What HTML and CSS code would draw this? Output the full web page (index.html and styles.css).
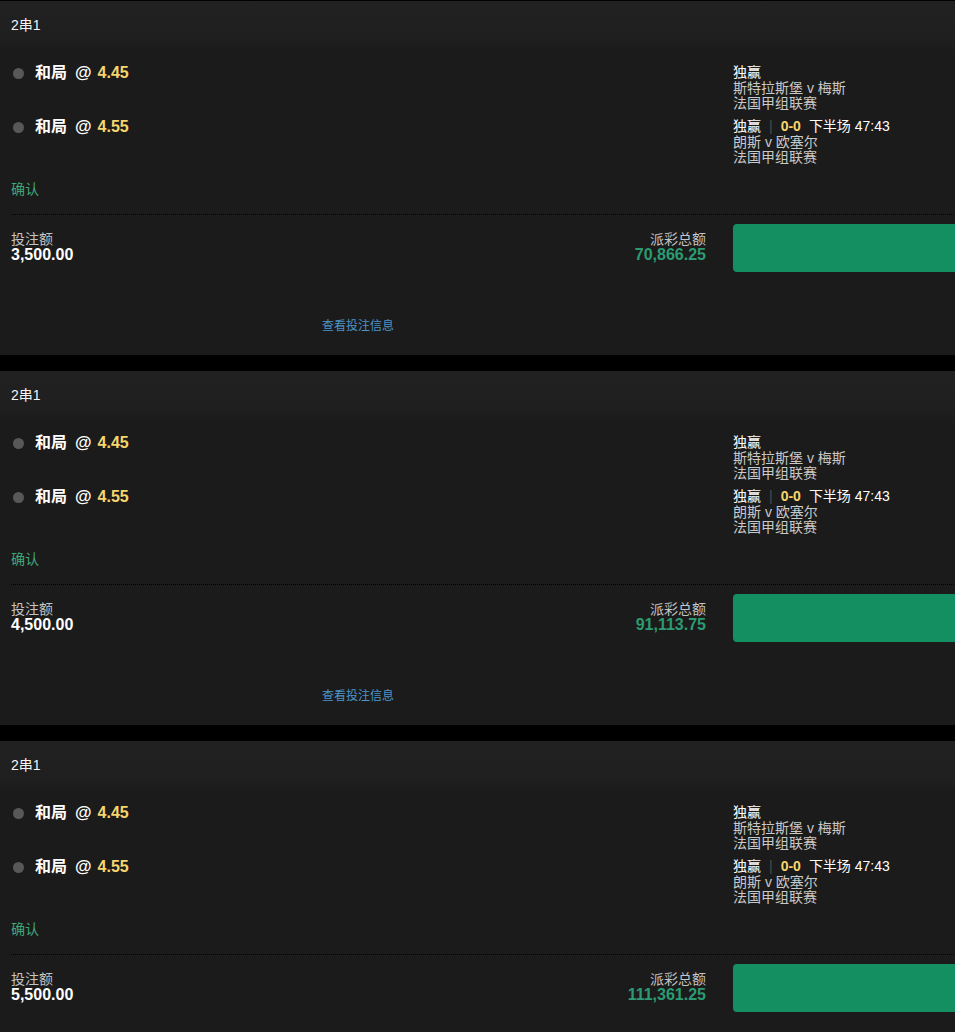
FILE: index.html
```html
<!DOCTYPE html>
<html lang="zh-CN">
<head>
<meta charset="utf-8">
<title>2串1</title>
<link rel="stylesheet" href="styles.css">
</head>
<body>
<div class="list">

  <section class="card">
    <div class="card-head">2串1</div>
    <div class="card-body">
      <div class="sel">
        <div class="sel-main"><span class="dot"></span><span class="pick">和局</span><span class="at">@</span><span class="odds">4.45</span></div>
        <div class="sel-info">
          <div class="market">独赢</div>
          <div class="sub">斯特拉斯堡 v 梅斯</div>
          <div class="sub">法国甲组联赛</div>
        </div>
      </div>
      <div class="sel">
        <div class="sel-main"><span class="dot"></span><span class="pick">和局</span><span class="at">@</span><span class="odds">4.55</span></div>
        <div class="sel-info">
          <div class="market">独赢<span class="sep">|</span><span class="score">0-0</span>下半场 47:43</div>
          <div class="sub">朗斯 v 欧塞尔</div>
          <div class="sub">法国甲组联赛</div>
        </div>
      </div>
      <div class="confirm">确认</div>
      <div class="stake">
        <div class="stake-info">
          <div class="stake-left">
            <div class="lbl">投注额</div>
            <div class="amt">3,500.00</div>
          </div>
          <div class="stake-right">
            <div class="lbl">派彩总额</div>
            <div class="amt win">70,866.25</div>
          </div>
        </div>
        <div class="btn-col"><div class="btn"></div></div>
      </div>
      <div class="more"><span class="more-link">查看投注信息</span></div>
    </div>
  </section>

  <section class="card">
    <div class="card-head">2串1</div>
    <div class="card-body">
      <div class="sel">
        <div class="sel-main"><span class="dot"></span><span class="pick">和局</span><span class="at">@</span><span class="odds">4.45</span></div>
        <div class="sel-info">
          <div class="market">独赢</div>
          <div class="sub">斯特拉斯堡 v 梅斯</div>
          <div class="sub">法国甲组联赛</div>
        </div>
      </div>
      <div class="sel">
        <div class="sel-main"><span class="dot"></span><span class="pick">和局</span><span class="at">@</span><span class="odds">4.55</span></div>
        <div class="sel-info">
          <div class="market">独赢<span class="sep">|</span><span class="score">0-0</span>下半场 47:43</div>
          <div class="sub">朗斯 v 欧塞尔</div>
          <div class="sub">法国甲组联赛</div>
        </div>
      </div>
      <div class="confirm">确认</div>
      <div class="stake">
        <div class="stake-info">
          <div class="stake-left">
            <div class="lbl">投注额</div>
            <div class="amt">4,500.00</div>
          </div>
          <div class="stake-right">
            <div class="lbl">派彩总额</div>
            <div class="amt win">91,113.75</div>
          </div>
        </div>
        <div class="btn-col"><div class="btn"></div></div>
      </div>
      <div class="more"><span class="more-link">查看投注信息</span></div>
    </div>
  </section>

  <section class="card">
    <div class="card-head">2串1</div>
    <div class="card-body">
      <div class="sel">
        <div class="sel-main"><span class="dot"></span><span class="pick">和局</span><span class="at">@</span><span class="odds">4.45</span></div>
        <div class="sel-info">
          <div class="market">独赢</div>
          <div class="sub">斯特拉斯堡 v 梅斯</div>
          <div class="sub">法国甲组联赛</div>
        </div>
      </div>
      <div class="sel">
        <div class="sel-main"><span class="dot"></span><span class="pick">和局</span><span class="at">@</span><span class="odds">4.55</span></div>
        <div class="sel-info">
          <div class="market">独赢<span class="sep">|</span><span class="score">0-0</span>下半场 47:43</div>
          <div class="sub">朗斯 v 欧塞尔</div>
          <div class="sub">法国甲组联赛</div>
        </div>
      </div>
      <div class="confirm">确认</div>
      <div class="stake">
        <div class="stake-info">
          <div class="stake-left">
            <div class="lbl">投注额</div>
            <div class="amt">5,500.00</div>
          </div>
          <div class="stake-right">
            <div class="lbl">派彩总额</div>
            <div class="amt win">111,361.25</div>
          </div>
        </div>
        <div class="btn-col"><div class="btn"></div></div>
      </div>
      <div class="more"><span class="more-link">查看投注信息</span></div>
    </div>
  </section>

</div>
</body>
</html>
```

FILE: styles.css
```css
html, body {
  margin: 0;
  padding: 0;
  background: #000;
}

body {
  font-family: "Liberation Sans", "Noto Sans CJK SC", sans-serif;
  color: #fff;
  overflow-x: hidden;
}

.list {
  display: flex;
  flex-direction: column;
  gap: 16px;
  padding-top: 1px;
}

.card {
  height: 354px;
  background: #1b1b1b;
  overflow: hidden;
  display: flex;
  flex-direction: column;
}

.card-head {
  height: 48px;
  line-height: 48px;
  padding-left: 11px;
  font-size: 14px;
  color: #f4f4f4;
  background: linear-gradient(#212121, #1f1f1f 80%, #1c1c1c);
}

.card-body {
  padding-top: 16px;
  display: flex;
  flex-direction: column;
}

.sel {
  display: grid;
  grid-template-columns: 716px 1fr;
  height: 54px;
}

.sel-main {
  display: flex;
  align-items: center;
  height: 16px;
  padding-left: 13px;
  font-size: 16px;
  font-weight: bold;
  line-height: 16px;
}

.dot {
  width: 11px;
  height: 11px;
  border-radius: 50%;
  background: #585858;
  margin-right: 11px;
  flex: none;
}

.pick {
  color: #fff;
}

.at {
  color: #fff;
  margin: 0 6px 0 8px;
  font-size: 17px;
}

.odds {
  color: #f6d66c;
}

.sel-info {
  padding-left: 17px;
  font-size: 14px;
  line-height: 15.5px;
  color: #c9c9c9;
}

.market {
  color: #fff;
  white-space: nowrap;
}

.sep {
  color: #4e4e4e;
  margin: 0 8px 0 8px;
}

.score {
  color: #f6d66c;
  font-weight: bold;
  margin-right: 8px;
}

.confirm {
  padding-left: 11px;
  margin-top: 8px;
  font-size: 14px;
  line-height: 16px;
  color: #3fa77b;
}

.stake {
  margin-left: 11px;
  margin-top: 17px;
  padding-top: 10px;
  background-image: linear-gradient(90deg, #000 1px, transparent 1px);
  background-size: 2px 1px;
  background-repeat: repeat-x;
  background-position: 0 0;
  display: grid;
  grid-template-columns: 705px 1fr;
  align-items: start;
}

.stake-info {
  display: flex;
  justify-content: space-between;
  padding-top: 8px;
  padding-right: 10px;
}

.stake-right {
  text-align: right;
}

.lbl {
  font-size: 14px;
  line-height: 15px;
  color: #c4c4c4;
}

.amt {
  font-size: 16px;
  line-height: 16px;
  font-weight: bold;
  color: #fff;
}

.amt.win {
  color: #2b9c72;
}

.btn-col {
  padding-left: 17px;
  margin-right: -40px;
}

.btn {
  height: 48px;
  background: #138f62;
  border-radius: 4px;
}

.more {
  width: 716px;
  text-align: center;
  margin-top: 47px;
  font-size: 12px;
  line-height: 14px;
}

.more-link {
  color: #4d93c6;
}
```
